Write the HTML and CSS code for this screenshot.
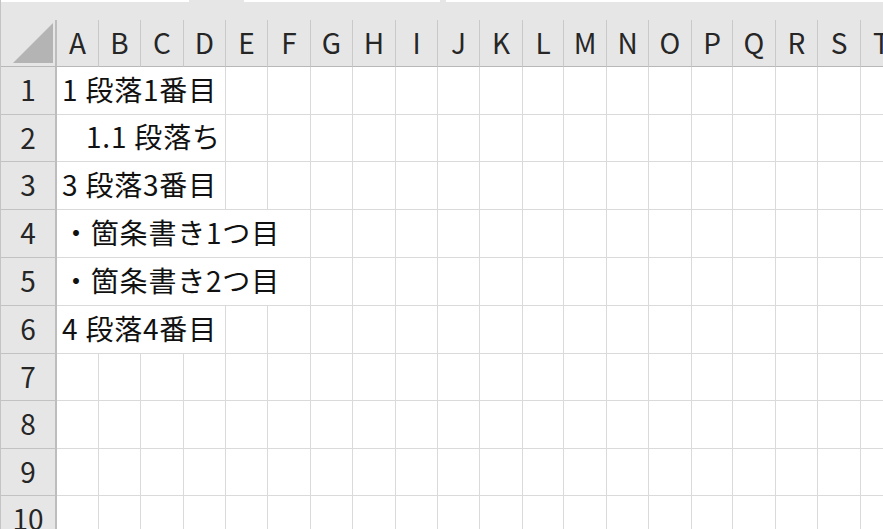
FILE: index.html
```html
<!DOCTYPE html>
<html lang="ja">
<head>
<meta charset="utf-8">
<link rel="stylesheet" href="styles.css">
</head>
<body>
<div class="app">
  <div class="topbar">
    <div class="box box1"></div>
    <div class="gap1"></div>
    <div class="box box2"></div>
    <div class="gap2"></div>
    <div class="box box3"></div>
  </div>
  <div class="sheet">
    <div class="corner"><div class="tri"></div></div>
    <div class="ch">A</div><div class="ch">B</div><div class="ch">C</div><div class="ch">D</div><div class="ch">E</div>
    <div class="ch">F</div><div class="ch">G</div><div class="ch">H</div><div class="ch">I</div><div class="ch">J</div>
    <div class="ch">K</div><div class="ch">L</div><div class="ch">M</div><div class="ch">N</div><div class="ch">O</div>
    <div class="ch">P</div><div class="ch">Q</div><div class="ch">R</div><div class="ch">S</div><div class="ch">T</div>

    <div class="rh">1</div>
    <div class="c t span4">1 段落1番目</div>
    <div class="c"></div><div class="c"></div><div class="c"></div><div class="c"></div><div class="c"></div><div class="c"></div><div class="c"></div><div class="c"></div><div class="c"></div><div class="c"></div><div class="c"></div><div class="c"></div><div class="c"></div><div class="c"></div><div class="c"></div><div class="c"></div>

    <div class="rh">2</div>
    <div class="c t span4 indent">1.1 段落ち</div>
    <div class="c"></div><div class="c"></div><div class="c"></div><div class="c"></div><div class="c"></div><div class="c"></div><div class="c"></div><div class="c"></div><div class="c"></div><div class="c"></div><div class="c"></div><div class="c"></div><div class="c"></div><div class="c"></div><div class="c"></div><div class="c"></div>

    <div class="rh">3</div>
    <div class="c t span4">3 段落3番目</div>
    <div class="c"></div><div class="c"></div><div class="c"></div><div class="c"></div><div class="c"></div><div class="c"></div><div class="c"></div><div class="c"></div><div class="c"></div><div class="c"></div><div class="c"></div><div class="c"></div><div class="c"></div><div class="c"></div><div class="c"></div><div class="c"></div>

    <div class="rh">4</div>
    <div class="c t span6">・箇条書き1つ目</div>
    <div class="c"></div><div class="c"></div><div class="c"></div><div class="c"></div><div class="c"></div><div class="c"></div><div class="c"></div><div class="c"></div><div class="c"></div><div class="c"></div><div class="c"></div><div class="c"></div><div class="c"></div><div class="c"></div>

    <div class="rh">5</div>
    <div class="c t span6">・箇条書き2つ目</div>
    <div class="c"></div><div class="c"></div><div class="c"></div><div class="c"></div><div class="c"></div><div class="c"></div><div class="c"></div><div class="c"></div><div class="c"></div><div class="c"></div><div class="c"></div><div class="c"></div><div class="c"></div><div class="c"></div>

    <div class="rh">6</div>
    <div class="c t span4">4 段落4番目</div>
    <div class="c"></div><div class="c"></div><div class="c"></div><div class="c"></div><div class="c"></div><div class="c"></div><div class="c"></div><div class="c"></div><div class="c"></div><div class="c"></div><div class="c"></div><div class="c"></div><div class="c"></div><div class="c"></div><div class="c"></div><div class="c"></div>

    <div class="rh">7</div>
    <div class="c"></div><div class="c"></div><div class="c"></div><div class="c"></div><div class="c"></div><div class="c"></div><div class="c"></div><div class="c"></div><div class="c"></div><div class="c"></div><div class="c"></div><div class="c"></div><div class="c"></div><div class="c"></div><div class="c"></div><div class="c"></div><div class="c"></div><div class="c"></div><div class="c"></div><div class="c"></div>

    <div class="rh">8</div>
    <div class="c"></div><div class="c"></div><div class="c"></div><div class="c"></div><div class="c"></div><div class="c"></div><div class="c"></div><div class="c"></div><div class="c"></div><div class="c"></div><div class="c"></div><div class="c"></div><div class="c"></div><div class="c"></div><div class="c"></div><div class="c"></div><div class="c"></div><div class="c"></div><div class="c"></div><div class="c"></div>

    <div class="rh">9</div>
    <div class="c"></div><div class="c"></div><div class="c"></div><div class="c"></div><div class="c"></div><div class="c"></div><div class="c"></div><div class="c"></div><div class="c"></div><div class="c"></div><div class="c"></div><div class="c"></div><div class="c"></div><div class="c"></div><div class="c"></div><div class="c"></div><div class="c"></div><div class="c"></div><div class="c"></div><div class="c"></div>

    <div class="rh">10</div>
    <div class="c"></div><div class="c"></div><div class="c"></div><div class="c"></div><div class="c"></div><div class="c"></div><div class="c"></div><div class="c"></div><div class="c"></div><div class="c"></div><div class="c"></div><div class="c"></div><div class="c"></div><div class="c"></div><div class="c"></div><div class="c"></div><div class="c"></div><div class="c"></div><div class="c"></div><div class="c"></div>
  </div>
</div>
</body>
</html>
```

FILE: styles.css
```css
html, body {
  margin: 0;
  padding: 0;
  background: #ffffff;
}
.app {
  width: 883px;
  height: 529px;
  overflow: hidden;
  background: #e6e6e6;
  border-left: 1px solid #c4c4c4;
  box-sizing: border-box;
  font-family: "Noto Sans CJK JP", "Noto Sans", sans-serif;
}
.topbar {
  height: 20px;
  display: flex;
  align-items: flex-start;
}
.box {
  height: 2px;
  background: #ffffff;
}
.box1 { width: 188px; }
.gap1 { width: 55px; }
.box2 { width: 196px; }
.gap2 { width: 6px; }
.box3 { flex: 1; }

.sheet {
  display: grid;
  grid-template-columns: 56px 42px 42px 43px 42px 42px 43px 42px 43px 42px 42px 43px 41px 43px 42px 43px 41px 43px 42px 43px 42px;
  grid-template-rows: 47px 48px 47px 48px 48px 48px 48px 47px 48px 47px 48px;
  font-size: 28px;
}
.sheet > div {
  box-sizing: border-box;
}
.corner {
  border-right: 2px solid #bdbdbd;
  border-bottom: 1px solid #b8b8b8;
  display: flex;
  justify-content: flex-end;
  align-items: flex-end;
  padding: 0 2px 3px 0;
}
.tri {
  width: 40px;
  height: 40px;
  background: #b4b4b4;
  clip-path: polygon(100% 0, 100% 100%, 0 100%);
}
.ch {
  border-right: 1px solid #c9c9c9;
  border-bottom: 1px solid #b8b8b8;
  display: flex;
  align-items: center;
  justify-content: center;
  color: #262626;
  padding-bottom: 2px;
}
.rh {
  border-right: 2px solid #bdbdbd;
  border-bottom: 1px solid #c2c2c2;
  display: flex;
  align-items: center;
  justify-content: center;
  color: #262626;
  padding-bottom: 3px;
}
.c {
  background: #ffffff;
  border-right: 1px solid #dadada;
  border-bottom: 1px solid #dadada;
}
.t {
  display: flex;
  align-items: center;
  padding: 0 0 4px 5px;
  color: #111111;
  letter-spacing: 0.8px;
  white-space: nowrap;
}
.span4 { grid-column: span 4; }
.span6 { grid-column: span 6; }
.indent { padding-left: 29px; }
```
